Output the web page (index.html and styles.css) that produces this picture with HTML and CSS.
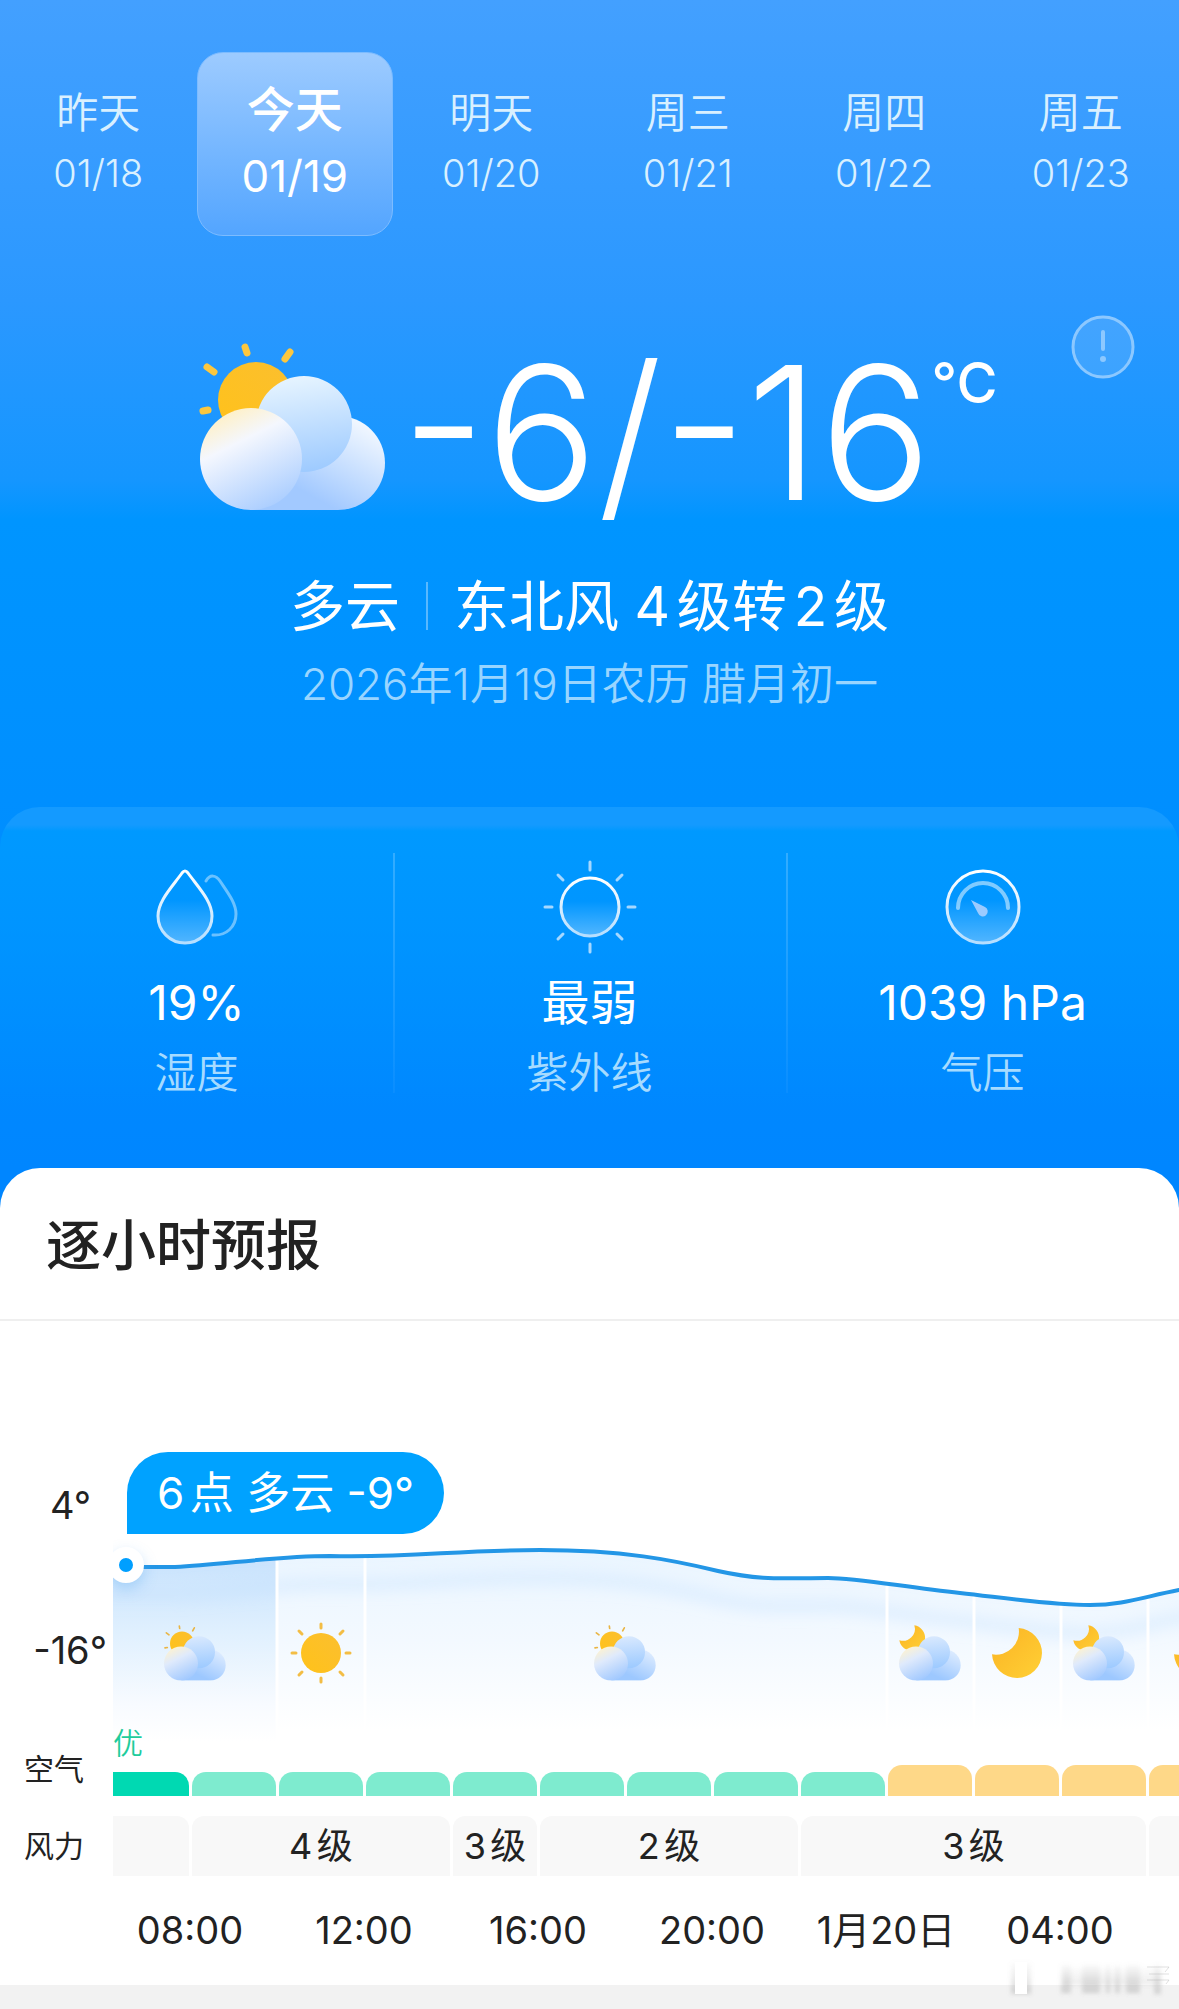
FILE: index.html
```html
<!DOCTYPE html>
<html lang="zh-CN">
<head>
    <meta charset="UTF-8" />
    <meta name="viewport" content="width=device-width, initial-scale=1" />
    <title>天气预报</title>
    <link rel="stylesheet" href="styles.css">
</head>
<body>
<!-- Iconos compartidos -->
<svg class="sprite" aria-hidden="true">
    <defs>
        <linearGradient id="gold" x1="0" y1="1" x2="1" y2="0">
            <stop offset="0" stop-color="#ffc21a"/>
            <stop offset="1" stop-color="#fbbf2f"/>
        </linearGradient>
        <linearGradient id="moon-fill" x1="0" y1="0" x2="1" y2="1">
            <stop offset="0" stop-color="#fbb324"/>
            <stop offset="1" stop-color="#ffd035"/>
        </linearGradient>
        <linearGradient id="s-right" gradientUnits="userSpaceOnUse" x1="165" y1="80" x2="125" y2="160">
            <stop offset="0" stop-color="#dcebff"/>
            <stop offset="1" stop-color="#9dc8ff"/>
        </linearGradient>
        <linearGradient id="s-mid" x1="0.4" y1="0" x2="0.5" y2="1">
            <stop offset="0" stop-color="#d9e9fe"/>
            <stop offset="1" stop-color="#9dcaff"/>
        </linearGradient>
        <linearGradient id="s-left" x1="0.25" y1="0" x2="0.75" y2="1">
            <stop offset="0" stop-color="#fff3cf"/>
            <stop offset="0.35" stop-color="#dfeafc"/>
            <stop offset="1" stop-color="#9cc6ff"/>
        </linearGradient>
        <symbol id="small-cloud" viewBox="0 0 186 167">
            <path d="M52 166V110L139 74A46 46 0 0 1 139 166Z" fill="url(#s-right)"/>
            <circle cx="105" cy="81" r="48" fill="url(#s-mid)"/>
            <circle cx="51" cy="115" r="51" fill="url(#s-left)"/>
        </symbol>
        <symbol id="cloud-sun" viewBox="0 0 186 167">
            <g stroke="#e9b545" stroke-width="5" stroke-linecap="round">
                <path d="M46 3l1 7M91 8l-5 9M7 23l8 6M3 68l7-1"/>
            </g>
            <circle cx="54" cy="55" r="36" fill="url(#gold)"/>
            <use href="#small-cloud"/>
        </symbol>
        <symbol id="cloud-moon" viewBox="0 0 186 167">
            <path d="M46 0A39 39 0 1 1 1 45A36 36 0 0 0 46 0Z" fill="url(#moon-fill)"/>
            <use href="#small-cloud"/>
        </symbol>
        <symbol id="moon" viewBox="0 0 150 150">
            <path d="M80 0A75 75 0 1 1 0 79A69 69 0 0 0 80 0Z" fill="url(#moon-fill)"/>
        </symbol>
        <symbol id="sun" viewBox="-31 -31 62 62">
            <circle r="20" fill="url(#gold)"/>
            <g stroke="#f3bd45" stroke-width="3" stroke-linecap="round">
                <path d="M0-29v4M0 25v4M-29 0h4M25 0h4M-22-22l3 3M19 19l3 3M22-22l-3 3M-19 19l-3 3"/>
            </g>
        </symbol>
    </defs>
</svg>

<header class="hero">
    <nav class="days">
        <button type="button" class="day"><span class="day-name">昨天</span><span class="day-date">01/18</span></button>
        <button type="button" class="day today"><span class="day-name">今天</span><span class="day-date">01/19</span></button>
        <button type="button" class="day"><span class="day-name">明天</span><span class="day-date">01/20</span></button>
        <button type="button" class="day"><span class="day-name">周三</span><span class="day-date">01/21</span></button>
        <button type="button" class="day"><span class="day-name">周四</span><span class="day-date">01/22</span></button>
        <button type="button" class="day"><span class="day-name">周五</span><span class="day-date">01/23</span></button>
    </nav>

    <section class="now">
        <button type="button" class="info" aria-label="说明">
            <svg viewBox="0 0 64 64" width="64" height="64">
                <circle cx="32" cy="32" r="30" fill="#fff" fill-opacity="0.12" stroke="#8cc8ff" stroke-width="3"/>
                <path d="M32 17v17" stroke="#8cc8ff" stroke-width="4" stroke-linecap="round"/>
                <circle cx="32" cy="44" r="3" fill="#8cc8ff"/>
            </svg>
        </button>
        <svg class="now-icon" viewBox="0 0 186 167" width="186" height="167" aria-label="多云">
            <defs>
                <linearGradient id="b-right" gradientUnits="userSpaceOnUse" x1="170" y1="80" x2="125" y2="160">
                    <stop offset="0" stop-color="#f4f9ff"/>
                    <stop offset="1" stop-color="#a2c9ff"/>
                </linearGradient>
                <linearGradient id="b-mid" x1="0.45" y1="0" x2="0.6" y2="1">
                    <stop offset="0" stop-color="#e6f4ff"/>
                    <stop offset="1" stop-color="#9dcaff"/>
                </linearGradient>
                <linearGradient id="b-left" x1="0.3" y1="0" x2="0.8" y2="1">
                    <stop offset="0" stop-color="#fff0c4"/>
                    <stop offset="0.3" stop-color="#f4f7fe"/>
                    <stop offset="1" stop-color="#a4caff"/>
                </linearGradient>
            </defs>
            <g stroke="#fcc73f" stroke-width="7" stroke-linecap="round">
                <path d="M46 4l2 6M91 9l-5 7M8 24l7 5M4 68l5-1"/>
            </g>
            <circle cx="57" cy="57" r="38" fill="url(#gold)"/>
            <path d="M52 167V110L139 73A47 47 0 0 1 139 167Z" fill="url(#b-right)"/>
            <circle cx="105" cy="81" r="48" fill="url(#b-mid)"/>
            <circle cx="52" cy="116" r="51" fill="url(#b-left)"/>
        </svg>
        <div class="temp">-6/-16<span class="unit">°C</span></div>
    </section>

    <div class="condition"><span>多云</span><span class="wind-now">东北风 4级转2级</span></div>
    <div class="full-date">2026年1月19日农历 腊月初一</div>

    <section class="stats">
        <div class="stat">
            <svg viewBox="0 0 84 96" width="84" height="96" aria-hidden="true">
                <defs>
                    <linearGradient id="glass" x1="0" y1="0" x2="0" y2="1">
                        <stop offset="0.4" stop-color="#fff" stop-opacity="0"/>
                        <stop offset="1" stop-color="#fff" stop-opacity="0.32"/>
                    </linearGradient>
                    <linearGradient id="rim" x1="0" y1="0" x2="0" y2="1">
                        <stop offset="0" stop-color="#fff"/>
                        <stop offset="1" stop-color="#b5deff"/>
                    </linearGradient>
                </defs>
                <path d="M51 22C55 15 61 16 65 22C73 34 81 44 81 55C81 68 71 77 58 76" fill="none" stroke="#fff" stroke-opacity="0.42" stroke-width="3" stroke-linecap="round"/>
                <path d="M27 14Q30 10 33 14C43 28 57 42 57 57A27 27 0 0 1 3 57C3 42 17 28 27 14Z" fill="url(#glass)" stroke="url(#rim)" stroke-width="3"/>
            </svg>
            <span class="stat-value">19%</span>
            <span class="stat-label">湿度</span>
        </div>
        <div class="stat">
            <svg viewBox="-48 -48 96 96" width="96" height="96" aria-hidden="true">
                <circle r="29" fill="url(#glass)" stroke="url(#rim)" stroke-width="3"/>
                <g stroke="#a6d8ff" stroke-width="3" stroke-linecap="round">
                    <path d="M0-45v8M0 37v8M-45 0h7M38 0h7M-32-32l5 5M27 27l5 5M32-32l-5 5M-27 27l-5 5"/>
                </g>
            </svg>
            <span class="stat-value">最弱</span>
            <span class="stat-label">紫外线</span>
        </div>
        <div class="stat">
            <svg viewBox="-48 -48 96 96" width="96" height="96" aria-hidden="true">
                <circle r="36" fill="url(#glass)" stroke="url(#rim)" stroke-width="3"/>
                <path d="M-25 1A25 25 0 0 1 25 1" fill="none" stroke="#fff" stroke-opacity="0.5" stroke-width="4" stroke-linecap="round"/>
                <path d="M-12-7L2 0A5 5 0 1 1-5 6Z" fill="#9ccbff"/>
            </svg>
            <span class="stat-value">1039 hPa</span>
            <span class="stat-label">气压</span>
        </div>
    </section>
</header>

<main class="sheet">
    <h1>逐小时预报</h1>
    <div class="hourly">
        <div class="axis"><span>4°</span><span>-16°</span></div>
        <div class="plot">
            <svg class="curve" width="1100" height="430" viewBox="0 0 1100 430" aria-hidden="true">
                <defs>
                    <linearGradient id="fade-strong" gradientUnits="userSpaceOnUse" x1="0" y1="240" x2="0" y2="420">
                        <stop offset="0" stop-color="#c9e3fd"/>
                        <stop offset="0.4" stop-color="#e0f0fe"/>
                        <stop offset="0.8" stop-color="#f8fbff"/>
                        <stop offset="1" stop-color="#fff"/>
                    </linearGradient>
                    <linearGradient id="fade-soft" gradientUnits="userSpaceOnUse" x1="0" y1="230" x2="0" y2="410">
                        <stop offset="0" stop-color="#eaf5ff"/>
                        <stop offset="0.5" stop-color="#f3f9ff"/>
                        <stop offset="1" stop-color="#fff"/>
                    </linearGradient>
                    <clipPath id="under">
                        <path d="M0 246H62C110 244 160 235 217 235C300 237 340 229 427 229C510 229 560 239 605 250C650 260 670 257 715 257C745 257 790 266 847 272C900 278 940 284 977 284C1010 284 1030 276 1066 269L1100 263V430H0Z"/>
                    </clipPath>
                    <filter id="soft" x="-5%" y="-50%" width="110%" height="200%"><feGaussianBlur stdDeviation="7"/></filter>
                </defs>
                <g clip-path="url(#under)">
                    <rect width="163" height="430" fill="url(#fade-strong)"/>
                    <rect x="163" width="937" height="430" fill="url(#fade-soft)"/>
                    <path transform="translate(0 28)" d="M-20 246H62C110 244 160 235 217 235C300 237 340 229 427 229C510 229 560 239 605 250C650 260 670 257 715 257C745 257 790 266 847 272C900 278 940 284 977 284C1010 284 1030 276 1066 269L1100 263" fill="none" stroke="#c4e0fb" stroke-opacity="0.35" stroke-width="14" filter="url(#soft)"/>
                    <path d="M164 0V430M252 0V430M774 0V430M861 0V430M948 0V430M1035 0V430" stroke="#fff" stroke-width="3"/>
                </g>
                <path d="M14 246H62C110 244 160 235 217 235C300 237 340 229 427 229C510 229 560 239 605 250C650 260 670 257 715 257C745 257 790 266 847 272C900 278 940 284 977 284C1010 284 1030 276 1066 269L1100 263" fill="none" stroke="#2396e6" stroke-width="4"/>
            </svg>
            <span class="marker"></span>
            <div class="tip">6点 多云 -9°</div>
            <div class="track weather">
                <svg class="span-2"><use href="#cloud-sun"/></svg>
                <svg class="sun"><use href="#sun"/></svg>
                <svg class="span-6"><use href="#cloud-sun"/></svg>
                <svg><use href="#cloud-moon"/></svg>
                <svg class="moon"><use href="#moon"/></svg>
                <svg><use href="#cloud-moon"/></svg>
                <svg class="moon late"><use href="#moon"/></svg>
            </div>
        </div>

        <div class="row-label air-label">空气</div>
        <div class="air">
            <span class="air-grade">优</span>
            <div class="track bars">
                <i class="now-bar"></i><i></i><i></i><i></i><i></i><i></i><i></i><i></i><i></i>
                <i class="fair"></i><i class="fair"></i><i class="fair"></i><i class="fair"></i>
            </div>
        </div>

        <div class="row-label">风力</div>
        <div class="track wind">
            <span class="first"></span>
            <span class="span-3">4级</span>
            <span>3级</span>
            <span class="span-3">2级</span>
            <span class="span-4">3级</span>
            <span></span>
        </div>

        <div></div>
        <div class="times">
            <time>08:00</time>
            <time>12:00</time>
            <time>16:00</time>
            <time>20:00</time>
            <time>1月20日</time>
            <time>04:00</time>
        </div>
    </div>
</main>

<svg class="stamp" viewBox="0 0 170 40" width="170" height="40" aria-hidden="true">
    <defs>
        <linearGradient id="stamp-fade" x1="0" y1="0" x2="0" y2="1">
            <stop offset="0" stop-color="#999" stop-opacity="0.05"/>
            <stop offset="1" stop-color="#777" stop-opacity="0.28"/>
        </linearGradient>
        <filter id="stamp-blur"><feGaussianBlur stdDeviation="2"/></filter>
    </defs>
    <g filter="url(#stamp-blur)" fill="url(#stamp-fade)">
        <rect x="8" y="4" width="20" height="31"/>
        <rect x="58" y="6" width="10" height="28"/>
        <rect x="79" y="6" width="18" height="28"/>
        <rect x="103" y="6" width="4" height="28"/>
        <rect x="112" y="6" width="5" height="28"/>
        <rect x="123" y="6" width="14" height="28"/>
        <rect x="151" y="6" width="7" height="29"/>
        <rect x="60" y="8" width="98" height="18" opacity="0.5"/>
    </g>
    <rect x="12" y="3" width="12" height="32" fill="#fff"/>
    <path d="M144 8h22l-4 5M146 15h20M144 21h22l-3 4" fill="none" stroke="#999" stroke-opacity="0.3"/>
</svg>
</body>
</html>
```
FILE: styles.css
```css
* {
    box-sizing: border-box;
}
body {
    margin: 0;
    min-height: 100vh;
    position: relative;
    background: #f2f2f2;
    color: #222;
    font-family: Inter, "Noto Sans CJK SC", sans-serif;
    text-autospace: normal;
    overflow-x: hidden;
}
button {
    margin: 0;
    padding: 0;
    border: none;
    background: none;
    color: inherit;
    font-family: inherit;
    cursor: pointer;
}
.sprite {
    position: absolute;
    width: 0;
    height: 0;
}

/* Cabecera */
.hero {
    padding-top: 52px;
    background: linear-gradient(180deg, #43a0ff 0, #2b98ff 300px, #1596ff 480px, #0095ff 520px, #008fff 800px, #0086ff 1168px);
    color: #fff;
    text-align: center;
}
.days {
    display: grid;
    grid-template-columns: repeat(6, 1fr);
}
.day {
    display: flex;
    flex-direction: column;
    align-items: center;
    height: 184px;
    padding-top: 31px;
    border-radius: 26px;
    line-height: 60px;
    color: #d9f0ff;
    font-weight: 350;
}
.day-name {
    font-size: 42px;
}
.day-date {
    font-size: 38px;
}
.today {
    padding-top: 24px;
    border: 1px solid #7dbcff;
    background: linear-gradient(180deg, #9dcbff, #53a5ff);
    color: #fff;
    line-height: 66px;
    font-weight: 400;
}
.today .day-name {
    font-size: 48px;
    font-weight: 500;
}
.today .day-date {
    font-size: 44px;
}
.now {
    position: relative;
    display: flex;
    justify-content: center;
    align-items: center;
    gap: 16px;
    height: 180px;
    margin-top: 100px;
    padding-left: 18px;
}
.info {
    position: absolute;
    top: -21px;
    right: 44px;
    line-height: 0;
}
.temp {
    display: flex;
    padding-top: 14px;
    font-size: 186px;
    line-height: 180px;
    font-weight: 300;
}
.unit {
    font-size: 56px;
    line-height: 80px;
    font-weight: 500;
}
.condition {
    display: flex;
    justify-content: center;
    align-items: center;
    margin-top: 50px;
    font-size: 55px;
    line-height: 80px;
}
.wind-now {
    display: flex;
    align-items: center;
    white-space: pre;
}
.wind-now::before {
    content: "";
    width: 2px;
    height: 48px;
    margin: 0 26px;
    background: rgba(255, 255, 255, 0.35);
}
.full-date {
    margin-top: 8px;
    font-size: 44px;
    line-height: 60px;
    font-weight: 350;
    color: #99d5ff;
    text-autospace: no-autospace;
}
.stats {
    display: grid;
    grid-template-columns: repeat(3, 1fr);
    margin-top: 93px;
    padding: 46px 0 105px;
    border-radius: 40px 40px 0 0;
    background: linear-gradient(180deg, #149aff 0, #149aff 18px, #0099ff 24px, rgba(0, 153, 255, 0) 300px);
}
.stat {
    position: relative;
    display: flex;
    flex-direction: column;
    align-items: center;
    padding-top: 6px;
}
.stat + .stat::before {
    content: "";
    position: absolute;
    top: 0;
    bottom: 10px;
    left: 0;
    width: 2px;
    background: linear-gradient(180deg, rgba(255, 255, 255, 0.2), rgba(255, 255, 255, 0.04));
}
.stat-value {
    margin-top: 18px;
    font-size: 48px;
    line-height: 60px;
}
.stat-label {
    margin-top: 10px;
    font-size: 42px;
    line-height: 60px;
    font-weight: 350;
    color: #a6dbff;
}

/* Pronóstico por horas */
.sheet {
    margin-top: -40px;
    border-radius: 40px 40px 0 0;
    background: #fff;
    overflow: hidden;
}
h1 {
    margin: 0;
    padding: 37px 46px 34px;
    border-bottom: 2px solid #efefef;
    font-size: 55px;
    line-height: 80px;
    font-weight: 500;
}
.hourly {
    display: grid;
    grid-template-columns: 113px minmax(0, 1fr);
    font-size: 36px;
}
.axis {
    display: flex;
    flex-direction: column;
    align-items: flex-end;
    gap: 105px;
    padding-top: 164px;
    padding-right: 6px;
    font-size: 38px;
    line-height: 40px;
}
.axis span:first-child {
    padding-right: 16px;
}
.plot {
    position: relative;
    height: 400px;
    overflow-x: clip;
}
.curve {
    position: absolute;
    top: 0;
    left: 0;
}
.marker {
    position: absolute;
    top: 226px;
    left: -5px;
    width: 36px;
    height: 36px;
    border: 11px solid #fff;
    border-radius: 50%;
    background: #009fff;
    box-shadow: 0 6px 14px rgba(90, 170, 240, 0.35);
}
.tip {
    position: absolute;
    top: 131px;
    left: 14px;
    padding: 0 30px;
    border-radius: 41px 41px 41px 0;
    background: #00a2ff;
    color: #fff;
    font-size: 44px;
    line-height: 82px;
    white-space: nowrap;
}
.air,
.wind,
.times {
    position: relative;
    overflow: hidden;
}
.track {
    display: grid;
    grid-template-columns: 77px repeat(13, 87px);
}
.weather {
    position: relative;
    padding-top: 301px;
    align-items: center;
    justify-items: center;
}
.weather svg {
    width: 62px;
    height: 56px;
}
.weather .sun {
    width: 62px;
    height: 62px;
}
.weather .moon {
    width: 50px;
    height: 50px;
}
.weather .late {
    grid-column: span 2;
    justify-self: start;
    margin-left: 27px;
}
.span-2 {
    grid-column: span 2;
}
.span-3 {
    grid-column: span 3;
}
.span-4 {
    grid-column: span 4;
}
.span-6 {
    grid-column: span 6;
}
.row-label {
    padding-left: 24px;
    font-size: 30px;
    line-height: 60px;
    align-self: end;
}
.air-label {
    line-height: 54px;
}
.air {
    height: 75px;
}
.air-grade {
    display: block;
    font-size: 30px;
    line-height: 44px;
    font-weight: 350;
    color: #1fcc9c;
}
.bars {
    height: 31px;
    align-items: end;
}
.bars i {
    height: 24px;
    margin: 0 1px 0 2px;
    border-radius: 14px 14px 0 0;
    background: #7eebcf;
}
.bars .now-bar {
    margin-left: 0;
    border-top-left-radius: 0;
    background: #00d9b2;
}
.bars .fair {
    height: 31px;
    background: #fed888;
}
.wind {
    margin-top: 20px;
    line-height: 60px;
    text-align: center;
}
.wind span {
    height: 60px;
    margin: 0 1px 0 2px;
    border-radius: 12px 12px 0 0;
    background: #f8f8f8;
}
.wind .first {
    margin-left: 0;
    border-top-left-radius: 0;
}
.times {
    display: grid;
    grid-template-columns: repeat(6, 174px);
    margin-left: -10px;
    font-size: 38px;
    line-height: 109px;
    text-align: center;
    text-autospace: no-autospace;
}
.stamp {
    position: absolute;
    right: 6px;
    bottom: 10px;
}
```
